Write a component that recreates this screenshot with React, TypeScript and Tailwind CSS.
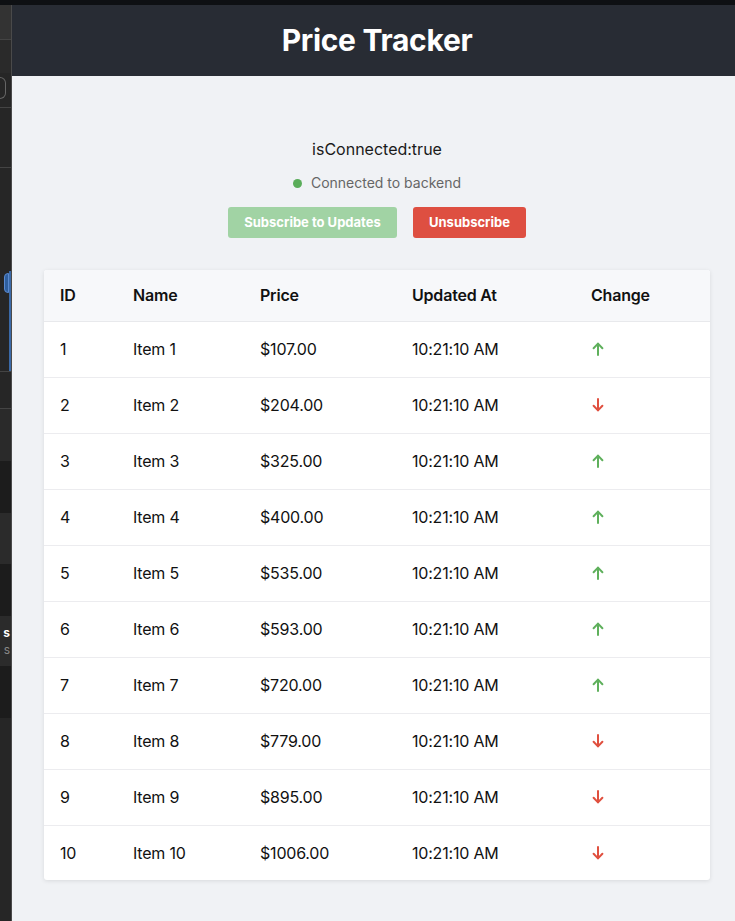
const rows = [
  { id: 1, name: "Item 1", price: 107, up: true },
  { id: 2, name: "Item 2", price: 204, up: false },
  { id: 3, name: "Item 3", price: 325, up: true },
  { id: 4, name: "Item 4", price: 400, up: true },
  { id: 5, name: "Item 5", price: 535, up: true },
  { id: 6, name: "Item 6", price: 593, up: true },
  { id: 7, name: "Item 7", price: 720, up: true },
  { id: 8, name: "Item 8", price: 779, up: false },
  { id: 9, name: "Item 9", price: 895, up: false },
  { id: 10, name: "Item 10", price: 1006, up: false },
]

function Arrow({ up }: { up: boolean }) {
  return (
    <svg
      width="12"
      height="14"
      viewBox="0 0 12 14"
      fill="none"
      stroke="currentColor"
      strokeWidth="2"
      strokeLinecap="round"
      strokeLinejoin="round"
      className={up ? "text-[#5fb05c]" : "text-[#e0503f] rotate-180"}
    >
      <path d="M6 13V1.8" />
      <path d="M1.6 6.2L6 1.6l4.4 4.6" />
    </svg>
  )
}

function SideStrip() {
  // bit of another window peeking in on the left
  return (
    <div className="w-[12px] shrink-0 flex flex-col bg-[#262626] border-r border-[#4a4a4a]">
      <div className="h-[35px] bg-[#333] border-b border-[#444]" />
      <div className="h-[33px] bg-[#2a2a2a]" />
      <div className="h-[30px] flex items-center">
        <div className="w-[6px] h-[22px] rounded-r-md border border-l-0 border-[#666]" />
      </div>
      <div className="h-[5px] border-b border-[#444]" />
      <div className="h-[60px] border-b border-[#444]" />
      <div className="h-[103px]" />
      <div className="h-[100px] border-r-2 border-[#3b6aa8] relative">
        <div className="absolute right-0 top-[2px] w-[5px] h-[20px] rounded-l bg-[#2f5f9e] border border-[#5a8ad0]" />
      </div>
      <div className="h-[30px] border-t border-[#444]" />
      <div className="h-[8px] border-b border-[#444]" />
      <div className="h-[52px] bg-[#2a2a2a]" />
      <div className="h-[52px] bg-[#1c1c1c]" />
      <div className="h-[51px] bg-[#2b2b2b]" />
      <div className="h-[52px] bg-[#1c1c1c]" />
      <div className="h-[50px] bg-[#2b2b2b] flex flex-col items-end justify-center text-[12px] leading-[17px] pr-[1px]">
        <span className="font-bold text-white">s</span>
        <span className="text-[#888]">s</span>
      </div>
      <div className="h-[52px] bg-[#1c1c1c]" />
      <div className="flex-1" />
    </div>
  )
}

export default function App() {
  return (
    <div className="w-[735px] h-[921px] overflow-hidden flex flex-col bg-[#f0f2f5] font-['Inter','Liberation_Sans',sans-serif]">
      <div className="h-[5px] shrink-0 bg-[#0e1013]" />
      <div className="flex flex-1 min-h-0">
        <SideStrip />

        <div className="flex-1 flex flex-col">
          {/* Header */}
          <header className="h-[71px] shrink-0 bg-[#282c34] flex items-center justify-center pl-[7px]">
            <h1 className="text-white text-[30px] font-bold tracking-[-0.3px]">Price Tracker</h1>
          </header>

          <main className="flex flex-col items-center pt-[61px] pl-[7px]">
            <p className="text-[16px] leading-[24px] text-[#1a1a1a]">isConnected:true</p>

            <div className="flex items-center gap-[9px] mt-[12px] text-[14px] leading-[20px] text-[#666]">
              <span className="w-[9px] h-[9px] rounded-full bg-[#5aad5a]" />
              <span>Connected to backend</span>
            </div>

            <div className="flex gap-[16px] mt-[14px]">
              <button className="w-[169px] h-[31px] rounded-[3px] bg-[#a1d3a4] text-white text-[13px] font-bold">
                Subscribe to Updates
              </button>
              <button className="w-[113px] h-[31px] rounded-[3px] bg-[#de4f41] text-white text-[13px] font-bold">
                Unsubscribe
              </button>
            </div>
          </main>

          <div className="ml-[32px] mt-[32px] w-[666px] bg-white rounded-[3px] shadow-[0_1px_4px_rgba(0,0,0,0.1)] overflow-hidden">
            <table className="w-full border-collapse text-left text-[16px] text-[#111] tracking-[-0.2px]">
              <thead>
                <tr className="h-[51px] bg-[#f7f8fa] border-b border-[#e8e9ec]">
                  <th className="w-[73px] pl-[16px] font-semibold">ID</th>
                  <th className="w-[127px] pl-[16px] font-semibold">Name</th>
                  <th className="w-[152px] pl-[16px] font-semibold">Price</th>
                  <th className="w-[179px] pl-[16px] font-semibold">Updated At</th>
                  <th className="pl-[16px] font-semibold">Change</th>
                </tr>
              </thead>
              <tbody>
                {rows.map((r, i) => (
                  <tr
                    key={r.id}
                    className={i === rows.length - 1 ? "h-[55px]" : "h-[56px] border-b border-[#ececef]"}
                  >
                    <td className="pl-[16px]">{r.id}</td>
                    <td className="pl-[16px]">{r.name}</td>
                    <td className="pl-[16px]">${r.price.toFixed(2)}</td>
                    <td className="pl-[16px]">10:21:10 AM</td>
                    <td className="pl-[17px]">
                      <Arrow up={r.up} />
                    </td>
                  </tr>
                ))}
              </tbody>
            </table>
          </div>
        </div>
      </div>
    </div>
  )
}
